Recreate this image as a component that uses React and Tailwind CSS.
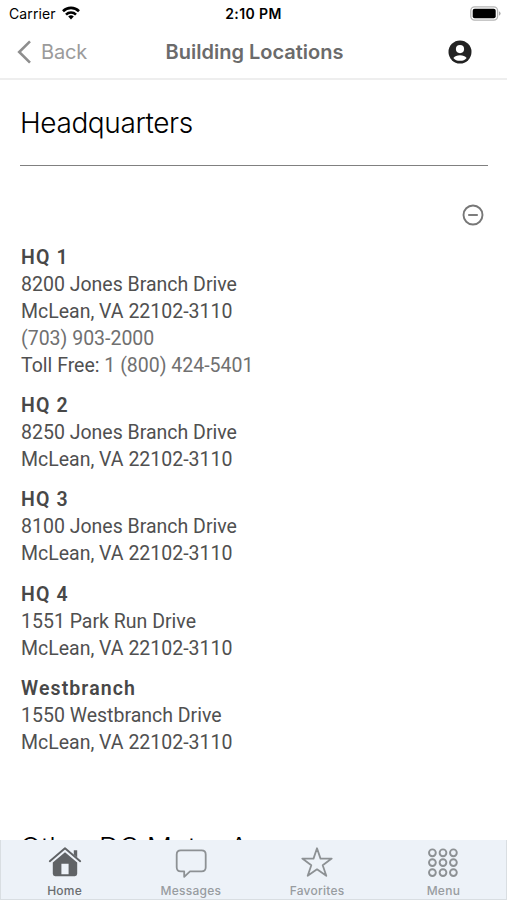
import React from 'react';

const locations = [
  {
    name: 'HQ 1',
    street: '8200 Jones Branch Drive',
    city: 'McLean, VA 22102-3110',
    phone: '(703) 903-2000',
    tollFree: '1 (800) 424-5401',
  },
  { name: 'HQ 2', street: '8250 Jones Branch Drive', city: 'McLean, VA 22102-3110' },
  { name: 'HQ 3', street: '8100 Jones Branch Drive', city: 'McLean, VA 22102-3110' },
  { name: 'HQ 4', street: '1551 Park Run Drive', city: 'McLean, VA 22102-3110' },
  { name: 'Westbranch', street: '1550 Westbranch Drive', city: 'McLean, VA 22102-3110' },
];

const HomeIcon = () => (
  <svg width="36" height="32" viewBox="0 0 36 32" fill="none">
    <path d="M2.8 15.2 18 2.2l15.2 13" stroke="#606366" strokeWidth="1.9" strokeLinecap="round" strokeLinejoin="round" />
    <path d="M26.8 4.2h3.4v7.2l-3.4-3z" fill="#606366" />
    <path
      fillRule="evenodd"
      d="M18 6.2 30.2 16.6v11.2q0 2.4-2.4 2.4H8.2q-2.4 0-2.4-2.4V16.6zM14.4 17.8v10.4h7.2V17.8z"
      fill="#606366"
    />
  </svg>
);

const MessagesIcon = () => (
  <svg width="36" height="32" viewBox="0 0 36 32" fill="none" stroke="#8d9194" strokeWidth="1.8" strokeLinejoin="round">
    <path d="M7.8 4.4h20.8q4.1 0 4.1 4.2v12.6q0 4.2-4.1 4.2H17l-5.8 5.4v-5.4H7.8q-4.1 0-4.1-4.2V8.6q0-4.2 4.1-4.2z" />
  </svg>
);

const FavoritesIcon = () => (
  <svg width="36" height="32" viewBox="0 0 36 32" fill="none" stroke="#8d9194" strokeWidth="1.8" strokeLinejoin="round">
    <path d="m18 2.3 3.5 10.3h11.2l-9 6.6 3.6 10.6-9.3-6.5-9.3 6.5 3.6-10.6-9-6.6h11.2z" />
  </svg>
);

const MenuIcon = () => (
  <svg width="36" height="32" viewBox="0 0 36 32" fill="none" stroke="#8d9194" strokeWidth="1.9">
    {[6.8, 16.6, 26.6].map((y) =>
      [7.4, 18, 28.4].map((x) => <circle key={`${x}-${y}`} cx={x} cy={y} r="3.4" />)
    )}
  </svg>
);

const tabs = [
  { label: 'Home', Icon: HomeIcon, active: true },
  { label: 'Messages', Icon: MessagesIcon },
  { label: 'Favorites', Icon: FavoritesIcon },
  { label: 'Menu', Icon: MenuIcon },
];

const StatusBar = () => (
  <div className="grid h-[26px] grid-cols-3 items-center text-black">
    <div className="flex items-center gap-[6px] pl-[9px]">
      <span className="text-[14px] tracking-[0.1px]">Carrier</span>
      <svg width="18" height="14" viewBox="0 0 18 14" fill="none" stroke="black" strokeWidth="2.6">
        <path d="M1 5.2a11.4 11.4 0 0 1 16 0" />
        <path d="M4 8.6a7.1 7.1 0 0 1 10 0" />
        <path d="m9 13.5-2.8-3a4 4 0 0 1 5.6 0z" fill="black" stroke="none" />
      </svg>
    </div>
    <span className="pt-px text-center text-[14px] font-semibold tracking-[0.4px]">2:10 PM</span>
    <svg className="mr-[6px] justify-self-end" width="31" height="15" viewBox="0 0 31 15">
      <rect x=".8" y=".9" width="26.8" height="13.2" rx="3.8" fill="white" stroke="#b5b5b5" strokeWidth="1.3" />
      <rect x="2.7" y="2.8" width="23" height="9.4" rx="2" fill="black" />
      <path d="M29 5.2q1.6.7 1.6 2.3T29 9.8z" fill="#aaa" />
    </svg>
  </div>
);

const Header = () => (
  <div className="grid h-[54px] grid-cols-[1fr_auto_1fr] items-center border-b-2 border-[#eeeeee]">
    <div className="flex items-center gap-[10px] pl-[17px] text-[#9b9b9b]">
      <svg width="14" height="24" viewBox="0 0 14 24" fill="none" stroke="#8e8e8e" strokeWidth="2.6">
        <path d="M13 1.3 2.2 12 13 22.7" />
      </svg>
      <span className="text-[20px] tracking-[-0.2px]">Back</span>
    </div>
    <h1 className="pl-[2px] text-[20px] font-semibold text-[#6b6b6b]">Building Locations</h1>
    <svg className="mr-[35px] justify-self-end" width="24" height="24" viewBox="0 0 24 24">
      <circle cx="12" cy="12" r="11.5" fill="#222" />
      <circle cx="12" cy="9.1" r="4.1" fill="white" />
      <path d="M5.4 17.9Q7.6 15.2 12 15.2t6.6 2.7Q16.4 20.8 12 20.8t-6.6-2.9z" fill="white" />
    </svg>
  </div>
);

const Location = ({ name, street, city, phone, tollFree }) => (
  <div className="text-[19.5px] leading-[27px] text-[#505050]">
    <h3 className="font-semibold tracking-[1.1px] text-[#484848]">{name}</h3>
    <p>{street}</p>
    <p>{city}</p>
    {phone && <p className="text-[#707070]">{phone}</p>}
    {tollFree && (
      <p>
        Toll Free: <span className="text-[#707070]">{tollFree}</span>
      </p>
    )}
  </div>
);

const TabBar = () => (
  <nav className="grid h-[60px] shrink-0 grid-cols-4 border-x border-b border-[#d9dee2] bg-[#edf2f8]">
    {tabs.map(({ label, Icon, active }) => (
      <div
        key={label}
        className={`flex flex-col items-center pt-[6px] pl-px ${active ? 'text-[#6a6d70]' : 'text-[#989ca0]'}`}
      >
        <Icon />
        <span className="mt-[5px] text-[12px] leading-[15px] font-medium tracking-[0.25px]">{label}</span>
      </div>
    ))}
  </nav>
);

const App = () => {
  return (
    <div className="flex h-[900px] w-[507px] flex-col overflow-hidden bg-white font-['Inter',sans-serif]">
      <StatusBar />
      <Header />
      <main className="min-h-0 flex-1 overflow-hidden pr-[19px] pl-5">
        <h2 className="pt-[23px] text-[28px] leading-[40px] font-light tracking-[-0.4px] text-black">Headquarters</h2>
        <div className="mt-[22px] border-t border-[#808080]" />
        <div className="mt-[38px] flex justify-end pr-1">
          <svg width="22" height="22" viewBox="0 0 22 22" fill="none" stroke="#777" strokeWidth="1.9">
            <circle cx="11" cy="11" r="9.5" />
            <path d="M6.2 11h9.6" />
          </svg>
        </div>
        <div className="mt-[18px] flex flex-col gap-[13.2px] pl-px font-['Roboto',sans-serif]">
          {locations.map((location) => (
            <Location key={location.name} {...location} />
          ))}
        </div>
        <h2 className="mt-[72px] text-[28px] leading-[40px] font-light tracking-[-0.2px] text-black">
          Other DC Metro Area
        </h2>
      </main>
      <TabBar />
    </div>
  );
};

export default App;
